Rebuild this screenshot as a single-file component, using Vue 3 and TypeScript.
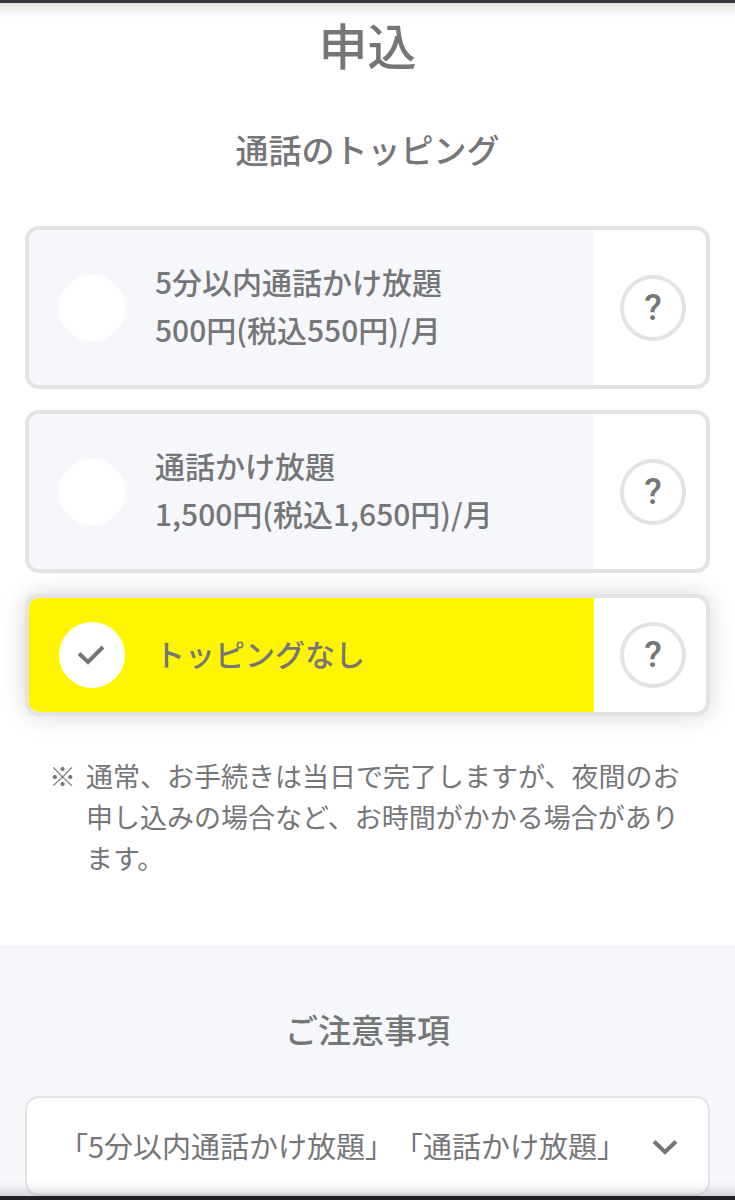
<script setup lang="ts">
import { ref } from 'vue'

interface Topping {
  id: string
  lines: string[]
}

const toppings: Topping[] = [
  { id: 'five', lines: ['5分以内通話かけ放題', '500円(税込550円)/月'] },
  { id: 'unlimited', lines: ['通話かけ放題', '1,500円(税込1,650円)/月'] },
  { id: 'none', lines: ['トッピングなし'] },
]

const selected = ref('none')
const expanded = ref(false)
</script>

<template>
  <div class="page" lang="ja">
    <main class="apply">
      <h1>申込</h1>
      <h2 id="topping-heading">通話のトッピング</h2>

      <div class="options" role="radiogroup" aria-labelledby="topping-heading">
        <div
          v-for="t in toppings"
          :key="t.id"
          class="card"
          :class="{ selected: selected === t.id }"
        >
          <label class="choice" :for="t.id">
            <span class="mark">
              <input :id="t.id" v-model="selected" type="radio" name="topping" :value="t.id" />
              <svg v-if="selected === t.id" viewBox="0 0 66 66" aria-hidden="true">
                <path d="M20 31.5 L29 40 L44 25" />
              </svg>
            </span>
            <span class="label">
              <span v-for="line in t.lines" :key="line" class="line">{{ line }}</span>
            </span>
          </label>
          <div class="help">
            <button type="button">?</button>
          </div>
        </div>
      </div>

      <p class="note">
        <span class="sign">※</span>
        <span>通常、お手続きは当日で完了しますが、夜間のお申し込みの場合など、お時間がかかる場合があります。</span>
      </p>
    </main>

    <section class="cautions">
      <h2>ご注意事項</h2>
      <button
        class="accordion"
        type="button"
        :aria-expanded="expanded"
        @click="expanded = !expanded"
      >
        <span>「5分以内通話かけ放題」「通話かけ放題」</span>
        <svg viewBox="0 0 26 20" aria-hidden="true">
          <path d="M2 6.5 L13 17 L24 6.5" />
        </svg>
      </button>
    </section>
  </div>
</template>

<style>
body {
  margin: 0;
  background: #fff;
}
</style>

<style scoped>
.page {
  position: relative;
  border-top: 3px solid #36383d;
  border-bottom: 4px solid #201f26;
  font-family: "Noto Sans CJK JP", sans-serif;
  color: #757678;
}

.page::before,
.page::after {
  content: "";
  position: absolute;
  left: 0;
  right: 0;
  height: 16px;
  pointer-events: none;
}

.page::before {
  top: 0;
  background: linear-gradient(rgba(40, 40, 50, 0.14), rgba(40, 40, 50, 0.03) 60%, rgba(40, 40, 50, 0));
}

.page::after {
  bottom: 0;
  background: linear-gradient(rgba(40, 40, 50, 0), rgba(40, 40, 50, 0.03) 40%, rgba(40, 40, 50, 0.16));
}

h1,
h2 {
  margin: 0;
  text-align: center;
  font-weight: 500;
}

h1 {
  padding-top: 5px;
  font-size: 49px;
  line-height: 72px;
}

h2 {
  font-size: 33px;
  line-height: 48px;
}

.apply {
  padding: 0 25px 67px;
}

.apply h2 {
  margin-top: 45px;
}

.options {
  display: flex;
  flex-direction: column;
  gap: 21px;
  margin-top: 53px;
}

.card {
  display: flex;
  border: 4px solid #e3e3e3;
  border-radius: 14px;
  background: #fff;
}

.card.selected {
  box-shadow: 0 0 24px rgba(0, 0, 0, 0.16);
}

.choice {
  flex: 1;
  display: flex;
  align-items: center;
  gap: 30px;
  padding: 24px 16px 24px 30px;
  border-radius: 10px 0 0 10px;
  background: #f5f7fb;
  cursor: pointer;
}

.selected .choice {
  background: #fff500;
}

.mark {
  position: relative;
  flex: none;
  width: 66px;
  height: 66px;
}

.mark input {
  appearance: none;
  display: block;
  width: 100%;
  height: 100%;
  margin: 0;
  border-radius: 50%;
  background: #fff;
}

.mark svg {
  position: absolute;
  inset: 0;
}

svg path {
  fill: none;
  stroke: #757678;
  stroke-width: 4;
}

.label {
  padding: 3px 0 8px;
}

.line {
  display: block;
  font-size: 30px;
  font-weight: 500;
  line-height: 48px;
}

.help {
  flex: none;
  box-sizing: border-box;
  display: flex;
  align-items: center;
  justify-content: center;
  width: 112px;
  padding-left: 6px;
}

.help button {
  width: 66px;
  height: 66px;
  padding: 0;
  border: 4px solid #e3e3e3;
  border-radius: 50%;
  background: #fff;
  color: #757678;
  font: 500 36px/58px Roboto, sans-serif;
}

.note {
  display: flex;
  gap: 10px;
  margin: 39px 16px 0 24px;
  font-size: 27px;
  line-height: 41px;
}

.sign {
  flex: none;
}

.cautions {
  padding: 60px 25px 0;
  background: #f5f7fb;
}

.accordion {
  display: flex;
  align-items: center;
  justify-content: space-between;
  width: 100%;
  margin-top: 43px;
  padding: 25px 30px 27px 32px;
  border: 2px solid #e2e4e4;
  border-radius: 14px;
  background: #fff;
  color: #757678;
  font-family: inherit;
  font-size: 29px;
  line-height: 44px;
  text-align: left;
  text-spacing-trim: space-all;
}

.accordion svg {
  flex: none;
  width: 26px;
  height: 20px;
}
</style>
